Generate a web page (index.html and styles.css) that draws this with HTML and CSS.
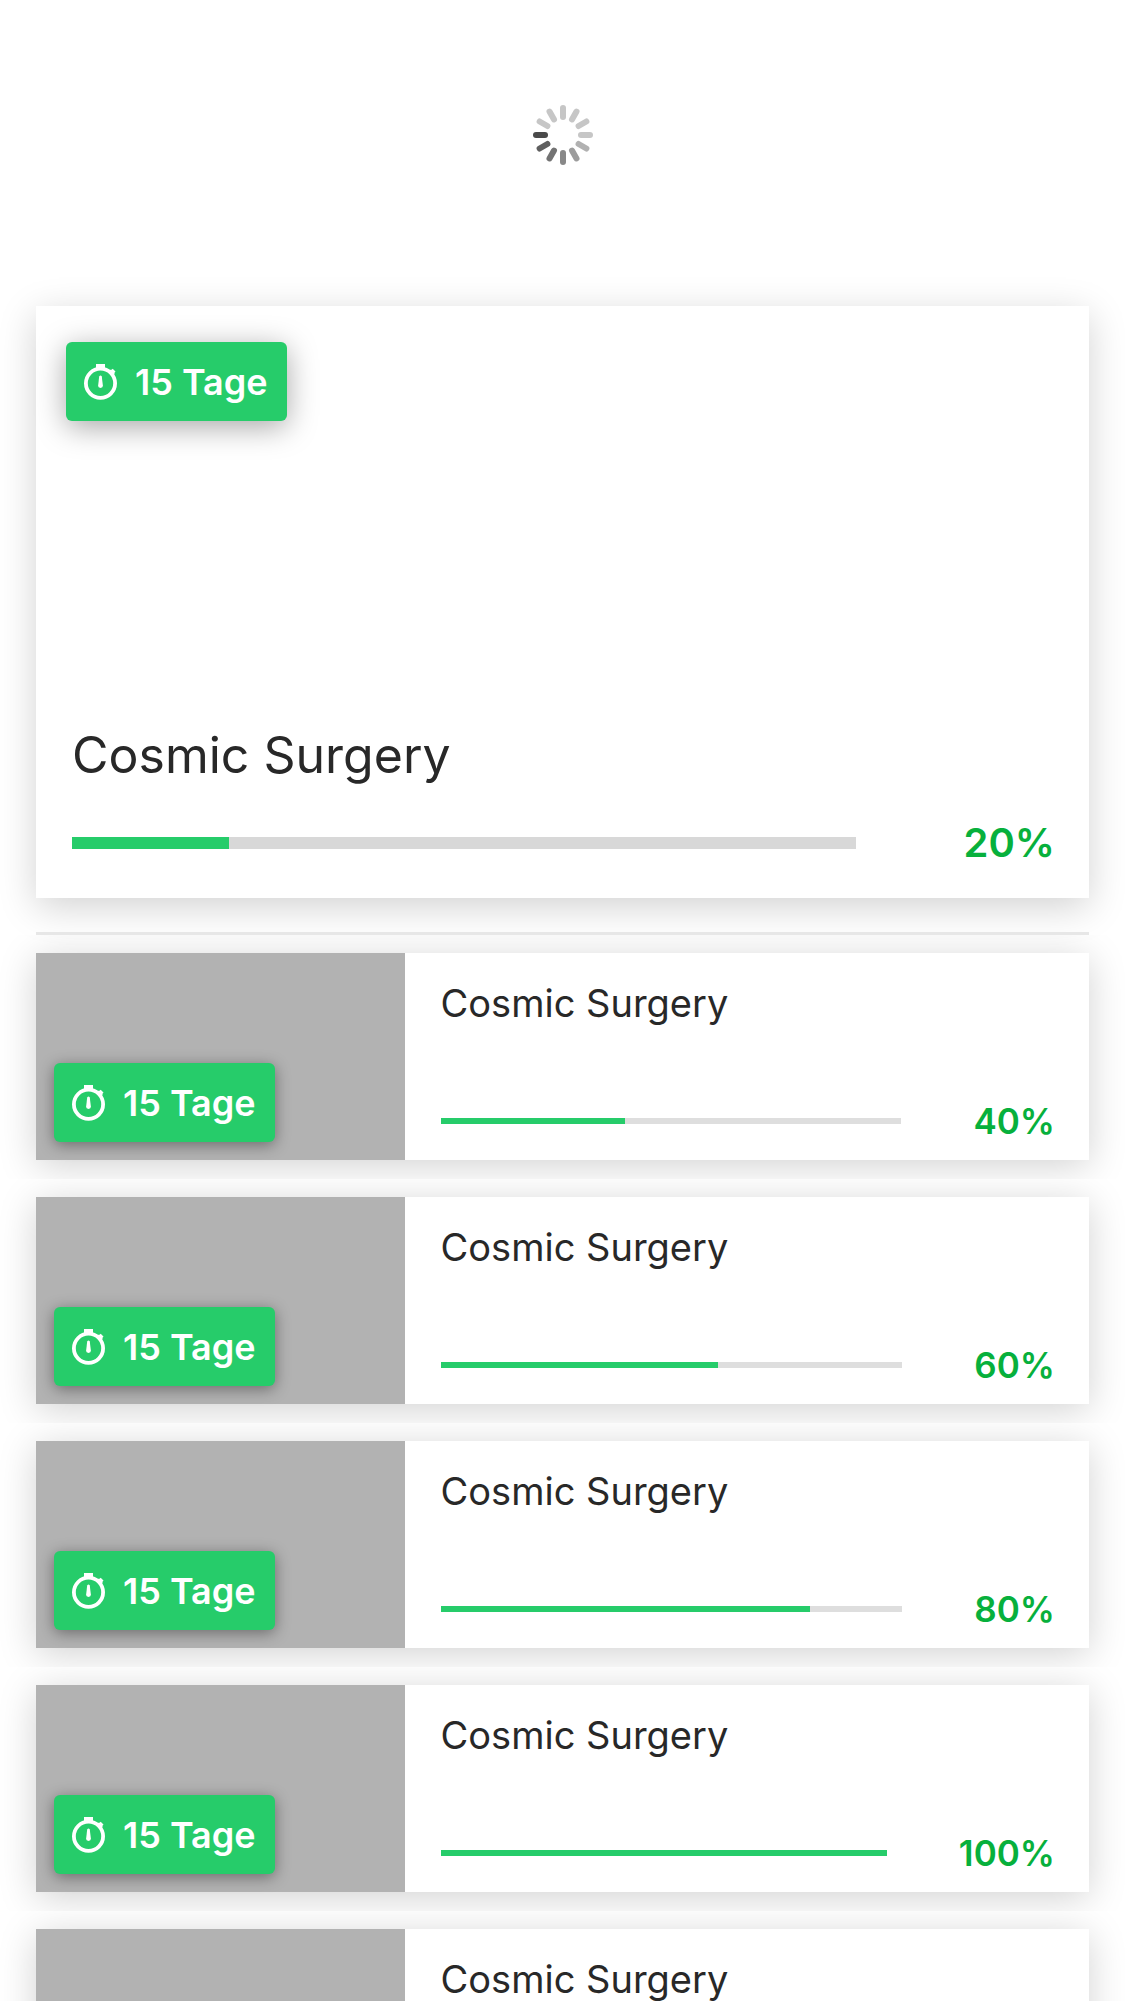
FILE: index.html
```html
<!DOCTYPE html>
<html lang="de">
<head>
<meta charset="utf-8">
<meta name="viewport" content="width=device-width, initial-scale=1">
<title>Projekte</title>
<link rel="stylesheet" href="styles.css">
</head>
<body>
<svg width="0" height="0" class="sprite" aria-hidden="true">
  <symbol id="stopwatch" viewBox="0 0 33 36">
    <circle cx="16.5" cy="19.3" r="14.6" fill="none" stroke="currentColor" stroke-width="3.8"/>
    <path d="M12 0h9v6h-9z" fill="currentColor"/>
    <path d="M24.5 7.5l1.8-1.8 1.2.1 1.2-1.1 2.8 2.8-1 1.2v1.2l-1.7 1.8z" fill="currentColor"/>
    <path d="M15.2 12.6q1.3-2.4 2.6 0l1.1 9.2q0 2.1-2.4 2.1t-2.4-2.1z" fill="currentColor"/>
  </symbol>
</svg>
<main class="app">
  <div class="loader" role="status" aria-label="Wird geladen">
    <svg class="spinner" viewBox="-30 -30 60 60" stroke-width="6" stroke-linecap="round">
      <g stroke="#c6c6c6">
        <path d="M0-18v-9"/>
        <path d="M0-18v-9" transform="rotate(30)"/>
        <path d="M0-18v-9" transform="rotate(60)"/>
        <path d="M0-18v-9" transform="rotate(90)"/>
        <path d="M0-18v-9" transform="rotate(300)"/>
        <path d="M0-18v-9" transform="rotate(330)"/>
      </g>
      <path d="M0-18v-9" transform="rotate(120)" stroke="#b1b1b1"/>
      <path d="M0-18v-9" transform="rotate(150)" stroke="#9c9c9c"/>
      <path d="M0-18v-9" transform="rotate(180)" stroke="#888"/>
      <path d="M0-18v-9" transform="rotate(210)" stroke="#737373"/>
      <path d="M0-18v-9" transform="rotate(240)" stroke="#5f5f5f"/>
      <path d="M0-18v-9" transform="rotate(270)" stroke="#4a4a4a"/>
    </svg>
  </div>

  <article class="hero">
    <div class="hero-media">
      <span class="badge"><svg class="badge-icon"><use href="#stopwatch"/></svg>15 Tage</span>
    </div>
    <div class="hero-body">
      <h1 class="hero-title">Cosmic Surgery</h1>
      <div class="meter meter-large">
        <progress class="bar" max="100" value="20" aria-label="Fortschritt"></progress>
        <span class="percent">20%</span>
      </div>
    </div>
  </article>

  <hr class="divider">

  <ul class="list">
    <li class="item">
      <article class="card">
        <div class="thumb"><span class="badge badge-flat"><svg class="badge-icon"><use href="#stopwatch"/></svg>15 Tage</span></div>
        <div class="card-body">
          <h2 class="card-title">Cosmic Surgery</h2>
          <div class="meter"><progress class="bar" max="100" value="40" aria-label="Fortschritt"></progress><span class="percent">40%</span></div>
        </div>
      </article>
    </li>
    <li class="item">
      <article class="card">
        <div class="thumb"><span class="badge badge-flat"><svg class="badge-icon"><use href="#stopwatch"/></svg>15 Tage</span></div>
        <div class="card-body">
          <h2 class="card-title">Cosmic Surgery</h2>
          <div class="meter"><progress class="bar" max="100" value="60" aria-label="Fortschritt"></progress><span class="percent">60%</span></div>
        </div>
      </article>
    </li>
    <li class="item">
      <article class="card">
        <div class="thumb"><span class="badge badge-flat"><svg class="badge-icon"><use href="#stopwatch"/></svg>15 Tage</span></div>
        <div class="card-body">
          <h2 class="card-title">Cosmic Surgery</h2>
          <div class="meter"><progress class="bar" max="100" value="80" aria-label="Fortschritt"></progress><span class="percent">80%</span></div>
        </div>
      </article>
    </li>
    <li class="item">
      <article class="card">
        <div class="thumb"><span class="badge badge-flat"><svg class="badge-icon"><use href="#stopwatch"/></svg>15 Tage</span></div>
        <div class="card-body">
          <h2 class="card-title">Cosmic Surgery</h2>
          <div class="meter"><progress class="bar" max="100" value="100" aria-label="Fortschritt"></progress><span class="percent">100%</span></div>
        </div>
      </article>
    </li>
    <li class="item">
      <article class="card">
        <div class="thumb"></div>
        <div class="card-body">
          <h2 class="card-title">Cosmic Surgery</h2>
        </div>
      </article>
    </li>
  </ul>
</main>
</body>
</html>
```
FILE: styles.css
```css
* {
  box-sizing: border-box;
}

body {
  margin: 0;
  background: #fff;
  color: #282828;
  font-family: Inter, "Liberation Sans", sans-serif;
}

.sprite {
  position: absolute;
}

.app {
  height: 100vh;
  overflow: hidden;
}

.loader {
  display: flex;
  justify-content: center;
  padding: 105px 0 141px;
}

.spinner {
  width: 60px;
  height: 60px;
}

.hero {
  margin: 0 36px;
  background: #fff;
  box-shadow: 0 9px 36px rgba(0, 0, 0, 0.18);
}

.hero-media {
  height: 419px;
  padding: 36px 30px;
}

.hero-body {
  display: flex;
  flex-direction: column;
  gap: 33px;
  padding: 0 34px 30px 36px;
}

.hero-title,
.card-title {
  margin: 0;
  font-weight: 400;
}

.hero-title {
  font-size: 50px;
  line-height: 60px;
}

.badge {
  display: inline-flex;
  align-items: center;
  gap: 18px;
  height: 79px;
  padding: 0 19px 0 18px;
  border-radius: 6px;
  background: #26cc6a;
  color: #fff;
  font-size: 36px;
  font-weight: 600;
  line-height: 42px;
  white-space: nowrap;
  box-shadow: 0 6px 30px rgba(0, 0, 0, 0.35);
}

.badge-flat {
  box-shadow: 0 3px 15px rgba(0, 0, 0, 0.4);
}

.badge-icon {
  width: 33px;
  height: 36px;
}

.meter {
  display: flex;
  align-items: center;
  gap: 72px;
}

.bar {
  flex: 1;
  min-width: 0;
  height: 6px;
  border: 0;
  background: #dedede;
  appearance: none;
}

.bar::-webkit-progress-bar {
  background: #dedede;
}

.bar::-webkit-progress-value {
  background: #26cc6a;
}

.percent {
  color: #07b03c;
  font-size: 35px;
  font-weight: 600;
  line-height: 42px;
}

.meter-large {
  gap: 108px;
}

.meter-large .bar {
  height: 12px;
}

.meter-large .bar::-webkit-progress-bar {
  background: #d8d8d8;
}

.meter-large .percent {
  font-size: 40px;
  line-height: 50px;
}

.divider {
  height: 3px;
  margin: 34px 36px 0;
  border: 0;
  background: #e7e7e7;
}

.list {
  margin: 0;
  padding: 0;
  list-style: none;
}

.item {
  padding: 18px 36px 19px;
  overflow: hidden;
}

.card {
  display: flex;
  min-height: 207px;
  background: #fff;
  box-shadow: 0 6px 36px rgba(0, 0, 0, 0.18);
}

.thumb {
  display: flex;
  align-items: flex-end;
  width: 35%;
  padding: 18px;
  background: #b2b2b2;
}

.card-body {
  display: flex;
  flex: 1;
  flex-direction: column;
  justify-content: space-between;
  padding: 24px 34px 18px 36px;
}

.card-title {
  font-size: 38px;
  line-height: 52px;
}
```
